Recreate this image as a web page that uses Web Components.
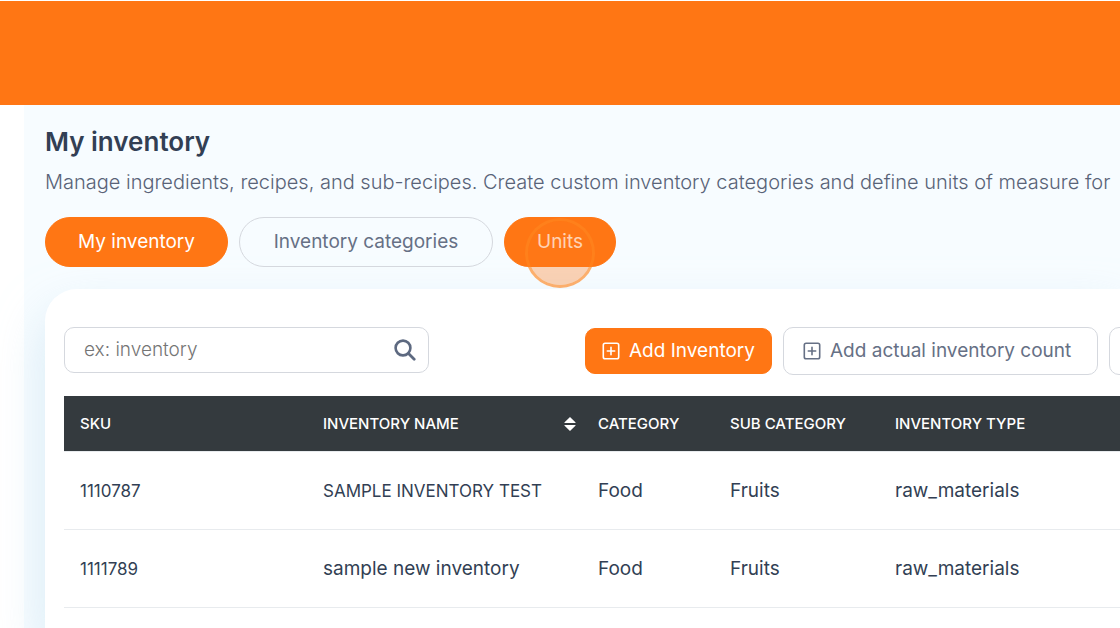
<!DOCTYPE html>
<html lang="en">
<head>
<meta charset="utf-8">
<meta name="viewport" content="width=device-width, initial-scale=1">
<title>My inventory</title>
<style>
  html { height: 100%; }
  body {
    margin: 0; min-height: 100%; background: #fff; color: #323f54;
    font: 400 19px/28px Inter, "Open Sans", sans-serif; overflow: hidden;
    --accent: #ff7614; --muted: #667085; --line: #d5d8de;
  }
</style>
</head>
<body>
<inventory-app></inventory-app>

<script>
const define = (name, html, setup) => {
  const template = document.createElement('template');
  template.innerHTML = html;
  customElements.define(name, class extends HTMLElement {
    constructor() {
      super();
      this.attachShadow({ mode: 'open' }).append(template.content.cloneNode(true));
    }
    connectedCallback() { if (setup) setup(this, this.shadowRoot); }
  });
};

define('top-bar', `
  <style>
    :host { display: block; height: 104px; border-top: 1px solid #fff; background: var(--accent); }
  </style>`);

define('tab-pill', `
  <style>
    :host { display: block; flex: none; }
    button {
      position: relative; display: block; box-sizing: border-box; height: 50px; padding: 0 32px;
      min-width: var(--pill-width, 112px);
      border: 1px solid var(--line); border-radius: 25px; background: transparent;
      color: var(--muted); font: inherit; white-space: nowrap; cursor: pointer;
    }
    :host([active]) button { background: var(--accent); border-color: var(--accent); color: #fff; }
  </style>
  <button type="button"><slot></slot></button>`);

define('tap-marker', `
  <style>
    :host {
      position: absolute; left: 50%; top: 0; width: 70px; height: 70px; box-sizing: border-box;
      transform: translateX(-50%); border: 3px solid rgba(255, 134, 30, .65); border-radius: 50%;
      background: rgba(255, 122, 26, .33); background-clip: padding-box; pointer-events: none;
    }
  </style>`);

define('plus-icon', `
  <style>
    :host { display: block; width: 18px; height: 18px; flex: none; }
    svg { display: block; }
  </style>
  <svg width="18" height="18" viewBox="0 0 18 18" fill="none" stroke="currentColor" stroke-width="1.6" stroke-linecap="round" aria-hidden="true">
    <rect x="1.3" y="1.3" width="15.4" height="15.4" rx="1.8"/><path d="M9 5.3v7.4M5.3 9h7.4"/>
  </svg>`);

define('action-button', `
  <style>
    :host { display: block; flex: none; }
    button {
      display: flex; align-items: center; gap: 9px; box-sizing: border-box; height: 48px;
      min-width: var(--button-width, 187px); padding: 0 19px;
      border: 1px solid var(--line); border-radius: 10px; background: #fff;
      color: var(--muted); font: inherit; white-space: nowrap; cursor: pointer;
    }
    :host([primary]) button {
      height: 46px; padding: 0 16px; background: var(--accent); border-color: var(--accent); color: #fff;
    }
  </style>
  <button type="button"><plus-icon></plus-icon><slot></slot></button>`,
  (host, root) => {
    if (host.hasAttribute('label')) root.querySelector('button').setAttribute('aria-label', host.getAttribute('label'));
  });

define('search-box', `
  <style>
    :host { display: block; flex: none; width: 365px; }
    label {
      display: flex; align-items: center; box-sizing: border-box; height: 46px; padding: 0 12px 0 19px;
      border: 1px solid var(--line); border-radius: 10px; background: #fff;
    }
    input {
      flex: 1; min-width: 0; padding: 0; border: 0; outline: 0; background: none;
      color: #323f54; font: inherit; font-weight: 300;
    }
    input::placeholder { color: #757575; opacity: 1; }
    svg { flex: none; color: #5d6980; }
  </style>
  <label>
    <input type="text" placeholder="ex: inventory" aria-label="Search inventory">
    <svg width="22" height="22" viewBox="0 0 22 22" fill="none" stroke="currentColor" aria-hidden="true">
      <circle cx="9" cy="9" r="7.4" stroke-width="2.6"/>
      <path d="M14.5 14.5l5.7 5.7" stroke-width="2.8" stroke-linecap="round"/>
    </svg>
  </label>`);

define('inventory-table', `
  <style>
    :host { display: block; }
    table { width: 100%; border-collapse: separate; border-spacing: 0; table-layout: fixed; }
    .sku { width: 243px; } .name { width: 275px; } .cat { width: 132px; } .sub { width: 165px; }
    th, td { box-sizing: border-box; padding: 0 0 0 16px; text-align: left; white-space: nowrap; border-bottom: 1px solid #e8ebee; }
    th { height: 56px; background: #343a3e; background-clip: padding-box; color: #fff; font-size: 15px; font-weight: 500; line-height: 24px; }
    td { height: 78px; }
    td.caps { font-size: 17px; }
    .sortable { display: flex; align-items: center; justify-content: space-between; padding-right: 6px; }
    svg { display: block; }
  </style>
  <table>
    <colgroup><col class="sku"><col class="name"><col class="cat"><col class="sub"><col></colgroup>
    <thead>
      <tr>
        <th scope="col">SKU</th>
        <th scope="col"><div class="sortable">INVENTORY NAME
          <svg width="12" height="14" viewBox="0 0 12 14" fill="#fff" aria-hidden="true">
            <path d="M6 0l5.4 5.2c.4.4.2.9-.4.9H1c-.6 0-.8-.5-.4-.9zM6 14L.6 8.8C.2 8.4.4 7.9 1 7.9h10c.6 0 .8.5.4.9z"/>
          </svg></div></th>
        <th scope="col">CATEGORY</th>
        <th scope="col">SUB CATEGORY</th>
        <th scope="col">INVENTORY TYPE</th>
      </tr>
    </thead>
    <tbody>
      <tr><td class="caps">1110787</td><td class="caps">SAMPLE INVENTORY TEST</td><td>Food</td><td>Fruits</td><td>raw_materials</td></tr>
      <tr><td class="caps">1111789</td><td>sample new inventory</td><td>Food</td><td>Fruits</td><td>raw_materials</td></tr>
    </tbody>
  </table>`);

define('inventory-card', `
  <style>
    :host {
      display: block; flex: 1; padding: 38px 0 0 19px; border-radius: 32px 0 0 0; background: #fff;
      box-shadow: 0 24px 48px rgba(194, 224, 238, .6);
    }
    .tools { display: flex; align-items: flex-start; margin-bottom: 21px; }
    .actions { display: flex; align-items: center; gap: 11px; margin-left: 156px; }
    .count { --button-width: 315px; }
  </style>
  <div class="tools">
    <search-box></search-box>
    <div class="actions">
      <action-button primary>Add Inventory</action-button>
      <action-button class="count">Add actual inventory count</action-button>
      <action-button label="More inventory actions"></action-button>
    </div>
  </div>
  <inventory-table></inventory-table>`);

define('inventory-app', `
  <style>
    :host { display: flex; flex-direction: column; height: 100vh; overflow: hidden; }
    main {
      flex: 1; display: flex; flex-direction: column; margin-left: 24px; padding: 20px 0 0 21px;
      background: #f7fcff;
    }
    h1 { margin: 0; font-size: 26px; line-height: 34px; font-weight: 600; }
    p { margin: 9px 0 21px; color: #596378; font-size: 20px; font-weight: 300; white-space: nowrap; }
    nav { display: flex; gap: 11px; margin-bottom: 22px; position: relative; z-index: 1; }
    .own { --pill-width: 183px; }
    .categories { --pill-width: 254px; }
  </style>
  <top-bar></top-bar>
  <main>
    <h1>My inventory</h1>
    <p>Manage ingredients, recipes, and sub-recipes. Create custom inventory categories and define units of measure for</p>
    <nav aria-label="Inventory sections">
      <tab-pill class="own" active>My inventory</tab-pill>
      <tab-pill class="categories">Inventory categories</tab-pill>
      <tab-pill active>Units<tap-marker></tap-marker></tab-pill>
    </nav>
    <inventory-card></inventory-card>
  </main>`);
</script>
</body>
</html>
